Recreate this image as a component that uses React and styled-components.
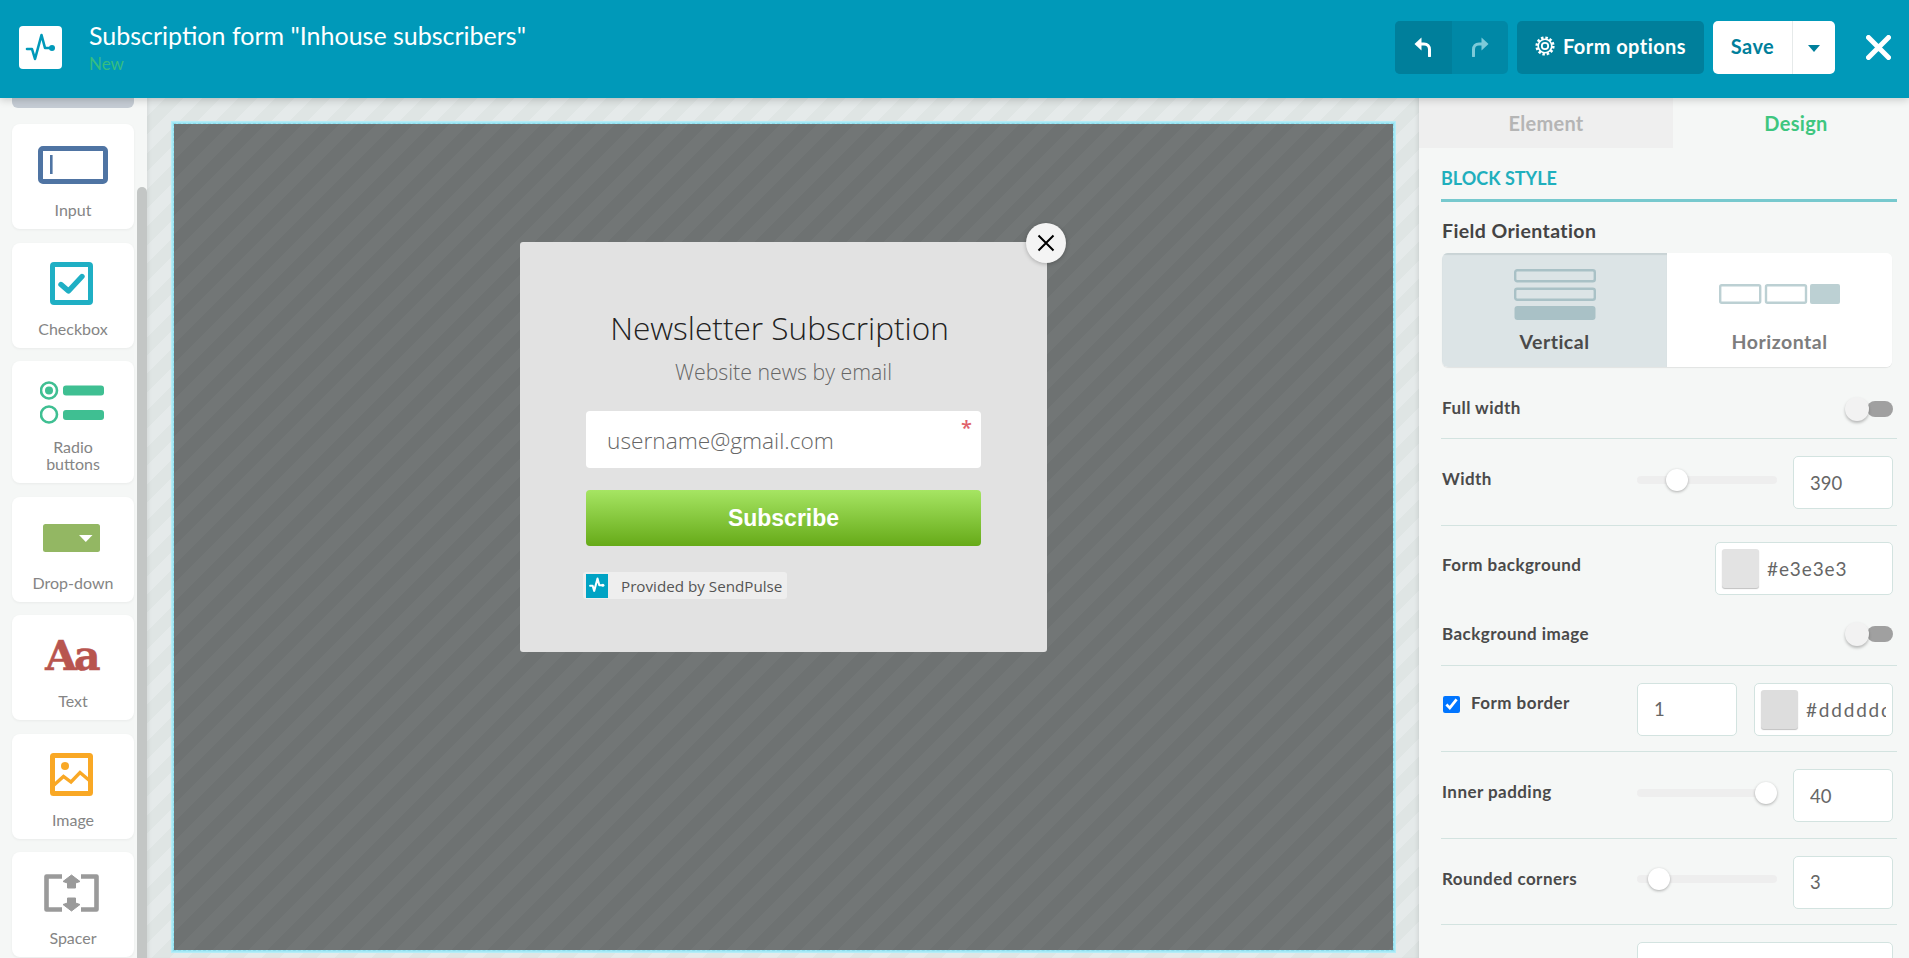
import React from "react";
import styled, { createGlobalStyle } from "styled-components";

const UI_FONT = `"Lato", "Noto Sans", sans-serif`;

const GlobalStyle = createGlobalStyle`
  html, body { margin: 0; padding: 0; height: 100%; overflow: hidden; }
  body { font-family: ${UI_FONT}; background: #f5f7f6; }
  * { box-sizing: border-box; }
`;

const Page = styled.div`
  width: 1909px;
  height: 958px;
  display: flex;
  flex-direction: column;
  overflow: hidden;
`;

/* ---------- top bar ---------- */
const TopBar = styled.header`
  flex: 0 0 98px;
  display: flex;
  align-items: center;
  background: #0099b9;
  padding: 0 18px 0 19px;
  box-shadow: 0 2px 8px rgba(0, 0, 0, 0.18);
  position: relative;
  z-index: 3;
`;
const LogoBox = styled.div`
  width: 43px;
  height: 43px;
  margin-top: -4px;
  border-radius: 4px;
  background: #fff;
  display: flex;
`;
const TitleBlock = styled.div`
  margin-left: 27px;
  flex: 1;
  margin-top: -4px;
`;
const FormTitle = styled.div`
  font-size: 25px;
  line-height: 30px;
  color: #fff;
`;
const FormStatus = styled.div`
  font-size: 17px;
  line-height: 22px;
  margin-top: 3px;
  color: #35bd82;
`;
const Actions = styled.div`
  display: flex;
  align-items: center;
  gap: 9px;
  margin-top: -4px;
`;
const HistoryGroup = styled.div`
  display: flex;
  width: 113px;
  height: 53px;
  border-radius: 5px;
  overflow: hidden;
  background: #0088a6;
`;
const HistoryButton = styled.div`
  flex: 1;
  display: flex;
  align-items: center;
  justify-content: center;
  background: ${(p) => (p.$active ? "#007f9b" : "transparent")};
  color: ${(p) => (p.$active ? "#fff" : "#7ccad9")};
`;
const OptionsButton = styled.div`
  width: 187px;
  height: 53px;
  padding-bottom: 2px;
  border-radius: 5px;
  background: #007f9b;
  color: #fff;
  font-weight: 700;
  font-size: 20px;
  letter-spacing: 0.45px;
  display: flex;
  align-items: center;
  justify-content: center;
  gap: 8px;
`;
const SaveGroup = styled.div`
  width: 122px;
  height: 53px;
  border-radius: 5px;
  background: #fff;
  display: flex;
  color: #007f9b;
`;
const SaveLabel = styled.div`
  width: 80px;
  padding-bottom: 2px;
  font-size: 20px;
  letter-spacing: 0.45px;
  font-weight: 700;
  display: flex;
  align-items: center;
  justify-content: center;
  border-right: 1px solid #e6eaea;
`;
const SaveCaret = styled.div`
  flex: 1;
  display: flex;
  align-items: center;
  justify-content: center;
  padding-top: 2px;
`;
const CloseEditor = styled.div`
  margin-left: 22px;
  display: flex;
`;

/* ---------- workspace ---------- */
const Workspace = styled.div`
  flex: 1;
  display: flex;
  min-height: 0;
`;
const Palette = styled.aside`
  flex: 0 0 147px;
  position: relative;
  overflow: hidden;
  background: #f5f7f6;
  padding: 0 13px 0 12px;
`;
const Scrollbar = styled.div`
  position: absolute;
  right: 0;
  top: 89px;
  bottom: 0;
  width: 10px;
  border-radius: 5px 5px 0 0;
  background: #c3c6c5;
`;
const PaletteCut = styled.div`
  height: 10px;
  margin-bottom: 16px;
  border-radius: 0 0 6px 6px;
  background: #c5ccd4;
`;
const PaletteCard = styled.div`
  height: ${(p) => (p.$tall ? 122 : 105)}px;
  margin-bottom: 13.5px;
  padding-top: 10px;
  border-radius: 8px;
  background: #fff;
  box-shadow: 0 1px 3px rgba(0, 0, 0, 0.05);
  text-align: center;
`;
const CardIcon = styled.div`
  height: 62px;
  padding-right: 3px;
  display: flex;
  align-items: center;
  justify-content: center;
`;
const CardLabel = styled.div`
  margin-top: 5px;
  padding: 0 16px;
  font-size: 16px;
  line-height: 17px;
  font-weight: 400;
  color: #858585;
`;
const TextGlyph = styled.span`
  font-family: "DejaVu Serif", serif;
  font-weight: 700;
  font-size: 41px;
  line-height: 1;
  letter-spacing: -3px;
  color: #b8554f;
  -webkit-text-stroke: 0.6px #b8554f;
`;

const Canvas = styled.main`
  flex: 1;
  padding: 24px 24px 6px 25px;
  background: repeating-linear-gradient(135deg, #e5eaea 0 13px, #dfe5e4 13px 26px);
  box-shadow: inset 4px 0 4px -3px rgba(0, 0, 0, 0.08), inset -4px 0 4px -3px rgba(0, 0, 0, 0.1);
`;
const FormFrame = styled.div`
  height: 100%;
  border: 2px solid #a5e8f5;
  outline: 1px dashed #8bdcec;
  outline-offset: -2px;
  box-shadow: 0 0 0 1px #b5edf7;
  background: repeating-linear-gradient(135deg, #6e7272 0 13px, #727676 13px 26px);
  display: flex;
  justify-content: center;
  padding: 118px 0 0 0;
`;
const Modal = styled.div`
  width: 527px;
  height: 410px;
  position: relative;
  border-radius: 3px;
  background: #e2e2e2;
  padding: 66px 66px 0;
`;
const ModalClose = styled.div`
  position: absolute;
  top: -19px;
  right: -19px;
  width: 40px;
  height: 40px;
  border-radius: 50%;
  background: #f4f4f4;
  box-shadow: 0 1px 4px rgba(0, 0, 0, 0.25);
  display: flex;
  align-items: center;
  justify-content: center;
`;
const ModalTitle = styled.div`
  padding-right: 8px;
  font-family: "Open Sans", sans-serif;
  font-weight: 300;
  font-size: 31.6px;
  line-height: 40px;
  text-align: center;
  color: #222;
`;
const ModalSub = styled.div`
  font-family: "Open Sans", sans-serif;
  font-weight: 300;
  font-size: 21.3px;
  line-height: 28px;
  margin-top: 10px;
  text-align: center;
  color: #666;
`;
const EmailField = styled.div`
  position: relative;
  height: 57px;
  margin-top: 25px;
  border-radius: 4px;
  background: #fff;
  padding: 2px 21px 0;
  display: flex;
  align-items: center;
  font-family: "Open Sans", sans-serif;
  font-weight: 300;
  font-size: 22.7px;
  color: #666;
`;
const RequiredMark = styled.span`
  position: absolute;
  top: 5px;
  right: 9px;
  font-family: "Open Sans", sans-serif;
  font-weight: 600;
  font-size: 20px;
  line-height: 24px;
  color: #e0626b;
`;
const SubscribeButton = styled.div`
  height: 56px;
  margin-top: 22px;
  border-radius: 4px;
  background: linear-gradient(#a6e563, #66aa18);
  color: #fff;
  font-family: "Liberation Sans", Arial, sans-serif;
  font-weight: 700;
  font-size: 23px;
  display: flex;
  align-items: center;
  justify-content: center;
`;
const ProvidedBadge = styled.div`
  display: inline-flex;
  align-items: center;
  height: 27px;
  margin: 26px 0 0 -3px;
  padding: 0 5px 0 3px;
  border-radius: 3px;
  background: #eeeeee;
  font-family: "Open Sans", sans-serif;
  font-size: 15.2px;
  color: #555;
`;
const BadgeLogo = styled.div`
  width: 22px;
  height: 24px;
  margin-right: 13px;
  background: #00a3c4;
  display: flex;
`;

/* ---------- settings panel ---------- */
const SettingsPanel = styled.aside`
  flex: 0 0 490px;
  overflow: hidden;
  background: #f5f7f6;
`;
const Tabs = styled.div`
  display: flex;
  height: 50px;
`;
const Tab = styled.div`
  flex: 0 0 ${(p) => (p.$active ? 236 : 254)}px;
  padding-left: ${(p) => (p.$active ? 10 : 0)}px;
  display: flex;
  align-items: center;
  justify-content: center;
  font-size: 20px;
  letter-spacing: 0.3px;
  font-weight: 700;
  background: ${(p) => (p.$active ? "transparent" : "#efefef")};
  color: ${(p) => (p.$active ? "#3ec67f" : "#b5b5b5")};
`;
const PanelBody = styled.div`
  padding: 0 12px 0 22px;
`;
const BlockTitle = styled.div`
  height: 54px;
  padding-top: 19px;
  font-size: 18px;
  line-height: 22px;
  font-weight: 700;
  color: #1fafbd;
  border-bottom: 3px solid #77c9ce;
`;
const OrientationLabel = styled.div`
  margin-top: 18px;
  padding-left: 1px;
  font-size: 19.5px;
  letter-spacing: 0.4px;
  line-height: 22px;
  font-weight: 700;
  color: #444;
`;
const Segments = styled.div`
  display: flex;
  width: 450px;
  height: 114px;
  margin: 11px 0 0 1px;
  border-radius: 6px;
  overflow: hidden;
  background: #fff;
  box-shadow: 0 1px 1px rgba(0, 0, 0, 0.08);
`;
const Segment = styled.div`
  flex: 0 0 225px;
  display: flex;
  flex-direction: column;
  align-items: center;
  background: ${(p) => (p.$active ? "#dce4e6" : "#fff")};
  box-shadow: ${(p) => (p.$active ? "inset 0 2px 1px #c9d3d5" : "none")};
  color: ${(p) => (p.$active ? "#4a4a4a" : "#7d7d7d")};
  font-size: 19.5px;
  letter-spacing: 0.5px;
  font-weight: 700;
`;
const SegmentIcon = styled.div`
  height: 72px;
  display: flex;
  align-items: center;
  margin-top: 5px;
`;
const Row = styled.div`
  display: flex;
  align-items: center;
  height: ${(p) => p.$h || 86.5}px;
  padding: ${(p) => p.$pad || "17px 4px 15.5px 2px"};
  border-bottom: ${(p) => (p.$plain ? "none" : "1px solid #d3e3e0")};
`;
const RowLabel = styled.div`
  flex: 0 0 194px;
  margin-top: -8px;
  margin-left: -1px;
  margin-right: 1px;
  font-size: 17px;
  letter-spacing: 0.45px;
  font-weight: 700;
  color: #4a4a4a;
`;
const WideLabel = styled(RowLabel)`
  flex: 1;
  margin-top: ${(p) => p.$top || -2}px;
`;
const CheckLabel = styled.label`
  flex: 0 0 194px;
  display: flex;
  align-items: center;
  margin-top: -10px;
  font-size: 17px;
  letter-spacing: 0.45px;
  font-weight: 700;
  color: #4a4a4a;
`;
const Check = styled.input`
  width: 17px;
  height: 17px;
  margin: 0 11px 0 0;
  accent-color: #0075ff;
`;
const CheckText = styled.span`
  margin-top: -4px;
`;
const Toggle = styled.div`
  position: relative;
  width: 26px;
  height: 16px;
  border-radius: 8px;
  background: #a0a0a0;
`;
const ToggleThumb = styled.div`
  position: absolute;
  left: -22px;
  top: -4px;
  width: 24px;
  height: 24px;
  border-radius: 50%;
  background: #f2f2f2;
  box-shadow: 0 2px 3px rgba(0, 0, 0, 0.25);
`;
const ToggleWrap = styled.div`
  width: 48px;
  display: flex;
  justify-content: flex-end;
`;
const Slider = styled.div`
  position: relative;
  flex: 0 0 140px;
  height: 8px;
  margin: -6px 16px 0 0;
  border-radius: 4px;
  background: #eeeeee;
`;
const SliderThumb = styled.div`
  position: absolute;
  top: -7px;
  left: ${(p) => p.$left}px;
  width: 22px;
  height: 22px;
  border-radius: 50%;
  background: #fff;
  box-shadow: 0 1px 3px rgba(0, 0, 0, 0.3);
`;
const FieldBox = styled.div`
  flex: 0 0 ${(p) => p.$w}px;
  margin-left: ${(p) => p.$ml || 0}px;
  height: ${(p) => p.$h || 53}px;
  display: flex;
  align-items: center;
  gap: 8px;
  padding: 0 6px;
  overflow: hidden;
  border: 1px solid #d3e3e0;
  border-radius: 5px;
  background: #fff;
`;
const NumberInput = styled.input`
  width: 100%;
  border: 0;
  outline: 0;
  padding: 0 0 0 10px;
  background: transparent;
  font-family: ${UI_FONT};
  font-size: 18.5px;
  color: #666;
`;
const Swatch = styled.div`
  flex: 0 0 37px;
  height: 39px;
  border-radius: 3px;
  background: ${(p) => p.$color};
  box-shadow: 0 1px 1px rgba(0, 0, 0, 0.25);
`;
const ColorInput = styled.input`
  width: 100%;
  min-width: 0;
  border: 0;
  outline: 0;
  padding: 0;
  background: transparent;
  font-family: ${UI_FONT};
  font-size: 19px;
  letter-spacing: ${(p) => p.$spread || 0.9}px;
  color: #666;
`;
const LastField = styled.div`
  margin: 17px 4px 0 196px;
  height: 53px;
  border: 1px solid #d3e3e0;
  border-radius: 5px;
  background: #fff;
`;

/* ---------- drawings ---------- */
const PulseLogo = ({ size = 43, color = "#0099b9", width = 2.6 }) => (
  <svg width={size} height={size} viewBox="0 0 43 43" fill="none">
    <path
      d="M8 23H13L16 33L22.5 9L26 22H32"
      stroke={color}
      strokeWidth={width}
      strokeLinecap="round"
      strokeLinejoin="round"
    />
    <circle cx="33" cy="22" r="3" fill={color} />
  </svg>
);

const UndoIcon = ({ flip }) => (
  <svg
    width="18"
    height="20"
    viewBox="0 0 18 20"
    fill="none"
    style={flip ? { transform: "scaleX(-1)" } : undefined}
  >
    <path d="M6 7H10C13.5 7 15.5 9.5 15.5 12.5V19" stroke="currentColor" strokeWidth="3" strokeLinecap="round" />
    <path d="M7.5 0.5V13.5L0.5 7Z" fill="currentColor" />
  </svg>
);

const GearIcon = () => (
  <svg width="20" height="20" viewBox="0 0 20 20" fill="none" stroke="#fff">
    <circle cx="10" cy="10" r="8" strokeWidth="3.2" strokeDasharray="2.4 1.8" />
    <circle cx="10" cy="10" r="6.8" strokeWidth="1.6" />
    <circle cx="10" cy="10" r="3.2" strokeWidth="1.8" />
  </svg>
);

const InputIcon = () => (
  <svg width="70" height="38" viewBox="0 0 70 38" fill="none" style={{ marginRight: -3 }}>
    <rect x="2.5" y="2.5" width="65" height="33" rx="2.5" stroke="#4f74a3" strokeWidth="5" />
    <rect x="12" y="9" width="2.6" height="19" fill="#4f74a3" />
  </svg>
);

const CheckboxIcon = () => (
  <svg width="43" height="43" viewBox="0 0 43 43" fill="none">
    <rect x="2.5" y="2.5" width="38" height="38" rx="1.5" stroke="#1fafc4" strokeWidth="5" />
    <path d="M11 22.5L18.5 29L32 14.5" stroke="#1fafc4" strokeWidth="5.4" strokeLinecap="round" strokeLinejoin="round" />
  </svg>
);

const RadioIcon = () => (
  <svg width="64" height="43" viewBox="0 0 64 43" fill="none">
    <circle cx="9" cy="9.5" r="8" stroke="#3fbf92" strokeWidth="2.6" />
    <circle cx="9" cy="9.5" r="4" fill="#3fbf92" />
    <circle cx="9" cy="33.5" r="8" stroke="#3fbf92" strokeWidth="2.6" />
    <rect x="23" y="4.5" width="41" height="10" rx="3" fill="#3fbf92" />
    <rect x="23" y="29" width="41" height="10" rx="3" fill="#3fbf92" />
  </svg>
);

const DropdownIcon = () => (
  <svg width="57" height="28" viewBox="0 0 57 28">
    <rect width="57" height="28" rx="2.5" fill="#93b763" />
    <path d="M36 11H49.5L42.8 18Z" fill="#fff" />
  </svg>
);

const ImageIcon = () => (
  <svg width="43" height="43" viewBox="0 0 43 43" fill="none">
    <rect x="2.5" y="2.5" width="38" height="38" rx="1" stroke="#f9a825" strokeWidth="5" />
    <circle cx="15" cy="13" r="4" fill="#f9a825" />
    <path d="M4 32L13.5 23.5L21 29L30 19.5L40 28" stroke="#f9a825" strokeWidth="3.4" />
  </svg>
);

const SpacerIcon = () => (
  <svg width="55" height="38" viewBox="0 0 55 38" fill="none" stroke="#9a9a9a" strokeWidth="4.6">
    <path d="M18 2.5H2.5V35.5H18" strokeLinejoin="round" />
    <path d="M37 2.5H52.5V35.5H37" strokeLinejoin="round" />
    <path d="M27.5 1L36 7.5L31.5 9V14H23.5V9L19 7.5Z" fill="#9a9a9a" strokeWidth="1" strokeLinejoin="round" />
    <path d="M27.5 37L36 30.5L31.5 29V24H23.5V29L19 30.5Z" fill="#9a9a9a" strokeWidth="1" strokeLinejoin="round" />
  </svg>
);

const VerticalIcon = () => (
  <svg width="82" height="51" viewBox="0 0 82 51" fill="none" stroke="#a9c1c6" strokeWidth="2.4">
    <rect x="1.2" y="1.2" width="79.6" height="11" rx="2" />
    <rect x="1.2" y="19.7" width="79.6" height="11" rx="2" />
    <rect x="0.5" y="37" width="81" height="14" rx="3" fill="#a9c1c6" stroke="none" />
  </svg>
);

const HorizontalIcon = () => (
  <svg width="121" height="20" viewBox="0 0 121 20" fill="none" stroke="#bcd0d3" strokeWidth="2.4">
    <rect x="1.2" y="1.2" width="40" height="17.6" rx="1.5" />
    <rect x="47" y="1.2" width="40" height="17.6" rx="1.5" />
    <rect x="91" y="0" width="30" height="20" rx="2" fill="#bcd0d3" stroke="none" />
  </svg>
);

const paletteItems = [
  { label: "Input", icon: <InputIcon /> },
  { label: "Checkbox", icon: <CheckboxIcon /> },
  { label: "Radio buttons", icon: <RadioIcon />, tall: true },
  { label: "Drop-down", icon: <DropdownIcon /> },
  { label: "Text", icon: <TextGlyph>Aa</TextGlyph> },
  { label: "Image", icon: <ImageIcon /> },
  { label: "Spacer", icon: <SpacerIcon /> },
];

const ToggleControl = () => (
  <ToggleWrap>
    <Toggle>
      <ToggleThumb />
    </Toggle>
  </ToggleWrap>
);

const SliderRow = ({ label, left, value }) => (
  <Row>
    <RowLabel>{label}</RowLabel>
    <Slider>
      <SliderThumb $left={left} />
    </Slider>
    <FieldBox $w={100}>
      <NumberInput readOnly value={value} />
    </FieldBox>
  </Row>
);

export default function App() {
  return (
    <Page>
      <GlobalStyle />
      <TopBar>
        <LogoBox>
          <PulseLogo />
        </LogoBox>
        <TitleBlock>
          <FormTitle>Subscription form "Inhouse subscribers"</FormTitle>
          <FormStatus>New</FormStatus>
        </TitleBlock>
        <Actions>
          <HistoryGroup>
            <HistoryButton $active>
              <UndoIcon />
            </HistoryButton>
            <HistoryButton>
              <UndoIcon flip />
            </HistoryButton>
          </HistoryGroup>
          <OptionsButton>
            <GearIcon />
            Form options
          </OptionsButton>
          <SaveGroup>
            <SaveLabel>Save</SaveLabel>
            <SaveCaret>
              <svg width="12" height="7" viewBox="0 0 12 7">
                <path d="M0 0H12L6 7Z" fill="#007f9b" />
              </svg>
            </SaveCaret>
          </SaveGroup>
          <CloseEditor>
            <svg width="25" height="25" viewBox="0 0 25 25">
              <path d="M2.5 2.5L22.5 22.5M22.5 2.5L2.5 22.5" stroke="#fff" strokeWidth="5" strokeLinecap="round" />
            </svg>
          </CloseEditor>
        </Actions>
      </TopBar>

      <Workspace>
        <Palette>
          <Scrollbar />
          <PaletteCut />
          {paletteItems.map((item) => (
            <PaletteCard key={item.label} $tall={item.tall}>
              <CardIcon>{item.icon}</CardIcon>
              <CardLabel>{item.label}</CardLabel>
            </PaletteCard>
          ))}
        </Palette>

        <Canvas>
          <FormFrame>
            <Modal>
              <ModalClose>
                <svg width="18" height="18" viewBox="0 0 18 18">
                  <path d="M1.5 1.5L16.5 16.5M16.5 1.5L1.5 16.5" stroke="#000" strokeWidth="2" />
                </svg>
              </ModalClose>
              <ModalTitle>Newsletter Subscription</ModalTitle>
              <ModalSub>Website news by email</ModalSub>
              <EmailField>
                username@gmail.com
                <RequiredMark>*</RequiredMark>
              </EmailField>
              <SubscribeButton>Subscribe</SubscribeButton>
              <ProvidedBadge>
                <BadgeLogo>
                  <PulseLogo size={22} color="#fff" width={4} />
                </BadgeLogo>
                Provided by SendPulse
              </ProvidedBadge>
            </Modal>
          </FormFrame>
        </Canvas>

        <SettingsPanel>
          <Tabs>
            <Tab>Element</Tab>
            <Tab $active>Design</Tab>
          </Tabs>
          <PanelBody>
            <BlockTitle>BLOCK STYLE</BlockTitle>
            <OrientationLabel>Field Orientation</OrientationLabel>
            <Segments>
              <Segment $active>
                <SegmentIcon>
                  <VerticalIcon />
                </SegmentIcon>
                Vertical
              </Segment>
              <Segment>
                <SegmentIcon>
                  <HorizontalIcon />
                </SegmentIcon>
                Horizontal
              </Segment>
            </Segments>
            <Row $h={72} $pad="12px 4px 0 2px">
              <WideLabel>Full width</WideLabel>
              <ToggleControl />
            </Row>
            <SliderRow label="Width" left={29} value="390" />
            <Row $h={70} $plain $pad="16px 4px 1px 2px">
              <WideLabel $top={-8}>Form background</WideLabel>
              <FieldBox $w={178}>
                <Swatch $color="#e3e3e3" />
                <ColorInput readOnly value="#e3e3e3" />
              </FieldBox>
            </Row>
            <Row $h={70} $pad="8px 4px 0 2px">
              <WideLabel>Background image</WideLabel>
              <ToggleControl />
            </Row>
            <Row>
              <CheckLabel>
                <Check type="checkbox" defaultChecked />
                <CheckText>Form border</CheckText>
              </CheckLabel>
              <FieldBox $w={100}>
                <NumberInput readOnly value="1" />
              </FieldBox>
              <FieldBox $w={139} $ml={17}>
                <Swatch $color="#dddddd" />
                <ColorInput readOnly value="#dddddd" $spread={1.8} />
              </FieldBox>
            </Row>
            <SliderRow label="Inner padding" left={118} value="40" />
            <SliderRow label="Rounded corners" left={11} value="3" />
            <LastField />
          </PanelBody>
        </SettingsPanel>
      </Workspace>
    </Page>
  );
}
